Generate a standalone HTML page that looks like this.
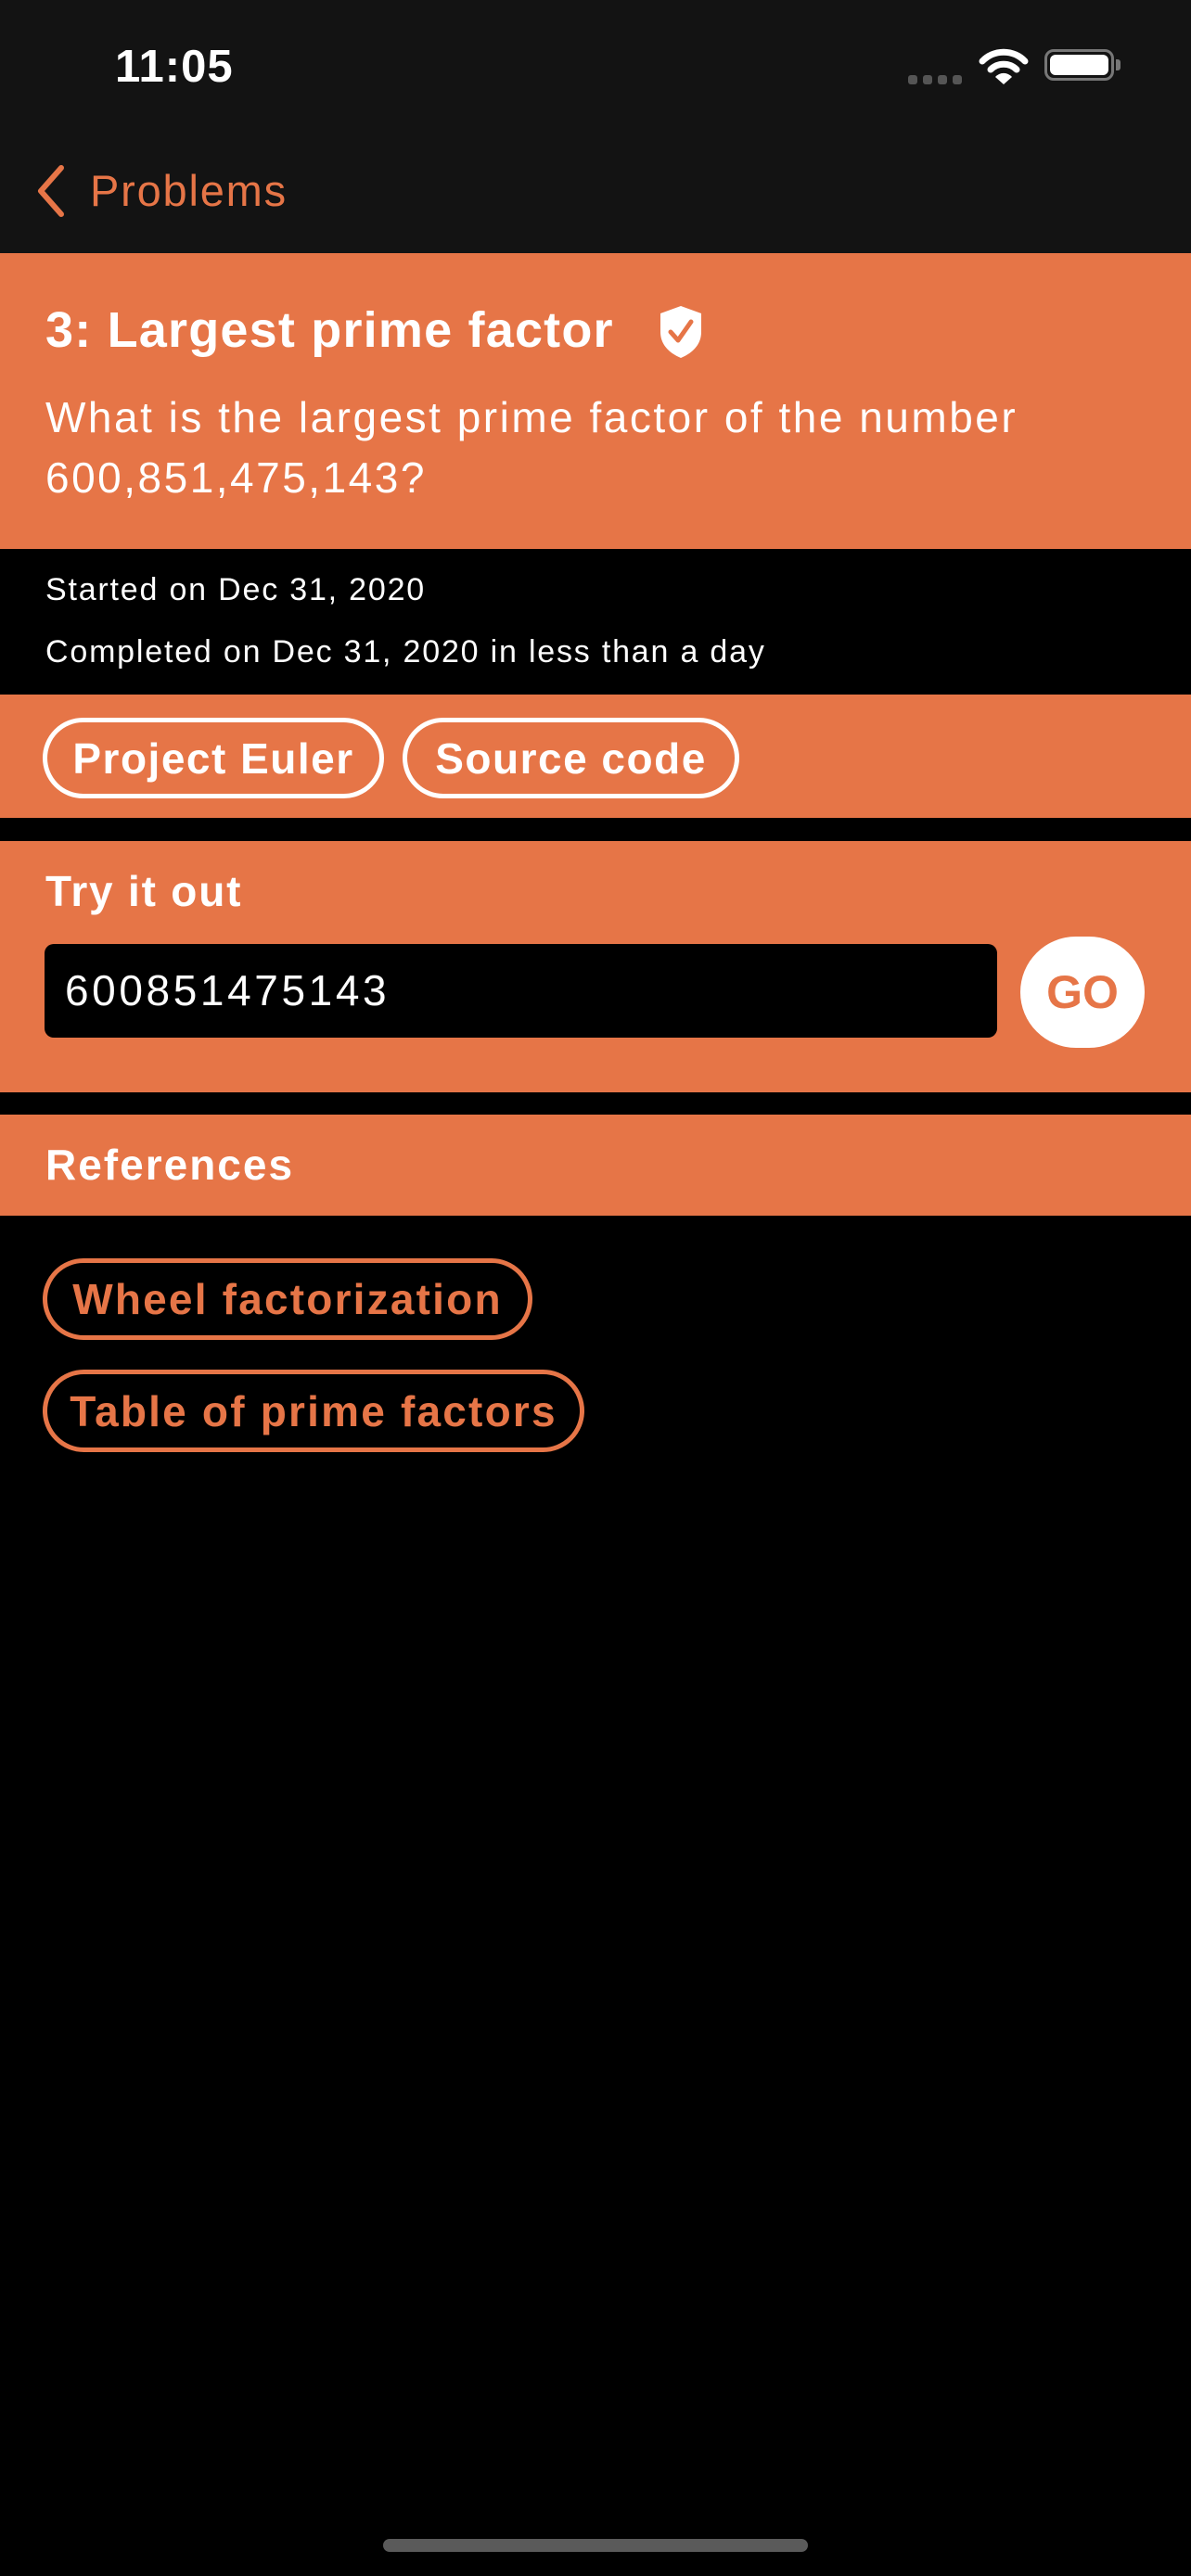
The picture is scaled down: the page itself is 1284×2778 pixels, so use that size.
<!DOCTYPE html>
<html><head><meta charset="utf-8"><style>
*{margin:0;padding:0;box-sizing:border-box}
body{width:1284px;height:2778px;background:#000;font-family:"Liberation Sans",sans-serif;position:relative;overflow:hidden;color:#fff}
.a{position:absolute;white-space:nowrap}
.or{background:#E67547;left:0;width:1284px}
.pill{position:absolute;border:5px solid #fff;border-radius:50px;font-size:46px;font-weight:bold;display:flex;align-items:center;justify-content:center;letter-spacing:1.5px}
.pill.o{border-color:#E67547;color:#E67547;letter-spacing:2.2px}
</style></head><body>
<div class="a" style="left:0;top:0;width:1284px;height:273px;background:#131313"></div>
<div class="a" style="left:124px;top:44px;font-size:49px;font-weight:bold;letter-spacing:1px">11:05</div>
<div class="a" style="left:979px;top:81px;width:10px;height:10px;border-radius:3px;background:#555"></div>
<div class="a" style="left:995px;top:81px;width:10px;height:10px;border-radius:3px;background:#555"></div>
<div class="a" style="left:1011px;top:81px;width:10px;height:10px;border-radius:3px;background:#555"></div>
<div class="a" style="left:1027px;top:81px;width:10px;height:10px;border-radius:3px;background:#555"></div>
<svg class="a" style="left:1055px;top:52px" width="54" height="40" viewBox="0 0 54 40"><path d="M4 14 A32 32 0 0 1 50 14" stroke="#fff" stroke-width="7" fill="none" stroke-linecap="round"/><path d="M13 23 A20 20 0 0 1 41 23" stroke="#fff" stroke-width="7" fill="none" stroke-linecap="round"/><path d="M18 31 L27 39 L36 31 A12 12 0 0 0 18 31Z" fill="#fff"/></svg>
<div class="a" style="left:1126px;top:53px;width:75px;height:34px;border:3px solid #777;border-radius:10px;padding:3px"><div style="width:100%;height:100%;background:#fff;border-radius:6px"></div></div>
<div class="a" style="left:1203px;top:64px;width:5px;height:12px;background:#777;border-radius:0 3px 3px 0"></div>
<svg class="a" style="left:36px;top:176px" width="40" height="60" viewBox="0 0 40 60"><path d="M30 5 L8 30 L30 55" stroke="#E67547" stroke-width="6" fill="none" stroke-linecap="round" stroke-linejoin="round"/></svg>
<div class="a" style="left:97px;top:178px;font-size:47px;color:#E67547;letter-spacing:1.8px">Problems</div>
<div class="a or" style="top:273px;height:319px"></div>
<div class="a" style="left:49px;top:325px;font-size:54px;font-weight:bold;letter-spacing:1.2px">3: Largest prime factor</div>
<svg class="a" style="left:708px;top:328px" width="52" height="60" viewBox="0 0 52 60"><path d="M26 2 L48 10 V30 C48 44 38 53 26 58 C14 53 4 44 4 30 V10 Z" fill="#fff"/><path d="M15 30 L23 39 L37 19" stroke="#E67547" stroke-width="5" fill="none" stroke-linecap="round" stroke-linejoin="round"/></svg>
<div class="a" style="left:49px;top:418px;font-size:46px;line-height:65px;letter-spacing:2.5px">What is the largest prime factor of the number<br>600,851,475,143?</div>
<div class="a" style="left:49px;top:617px;font-size:34px;letter-spacing:1.8px">Started on Dec 31, 2020</div>
<div class="a" style="left:49px;top:684px;font-size:34px;letter-spacing:1.8px">Completed on Dec 31, 2020 in less than a day</div>
<div class="a or" style="top:749px;height:133px"></div>
<div class="pill" style="left:46px;top:774px;width:368px;height:87px">Project Euler</div>
<div class="pill" style="left:434px;top:774px;width:363px;height:87px">Source code</div>
<div class="a or" style="top:907px;height:271px"></div>
<div class="a" style="left:49px;top:934px;font-size:46px;font-weight:bold;letter-spacing:1.8px">Try it out</div>
<div class="a" style="left:48px;top:1018px;width:1027px;height:101px;background:#000;border-radius:10px;font-size:46px;padding:23px 0 0 22px;letter-spacing:3.6px">600851475143</div>
<div class="a" style="left:1100px;top:1010px;width:134px;height:120px;background:#fff;border-radius:60px;color:#E67547;font-size:50px;font-weight:bold;display:flex;align-items:center;justify-content:center">GO</div>
<div class="a or" style="top:1202px;height:109px"></div>
<div class="a" style="left:49px;top:1229px;font-size:46px;font-weight:bold;letter-spacing:2px">References</div>
<div class="pill o" style="left:46px;top:1357px;width:528px;height:88px">Wheel factorization</div>
<div class="pill o" style="left:46px;top:1477px;width:584px;height:89px">Table of prime factors</div>
<div class="a" style="left:413px;top:2738px;width:458px;height:14px;border-radius:7px;background:#5a5a5a"></div>
</body></html>
